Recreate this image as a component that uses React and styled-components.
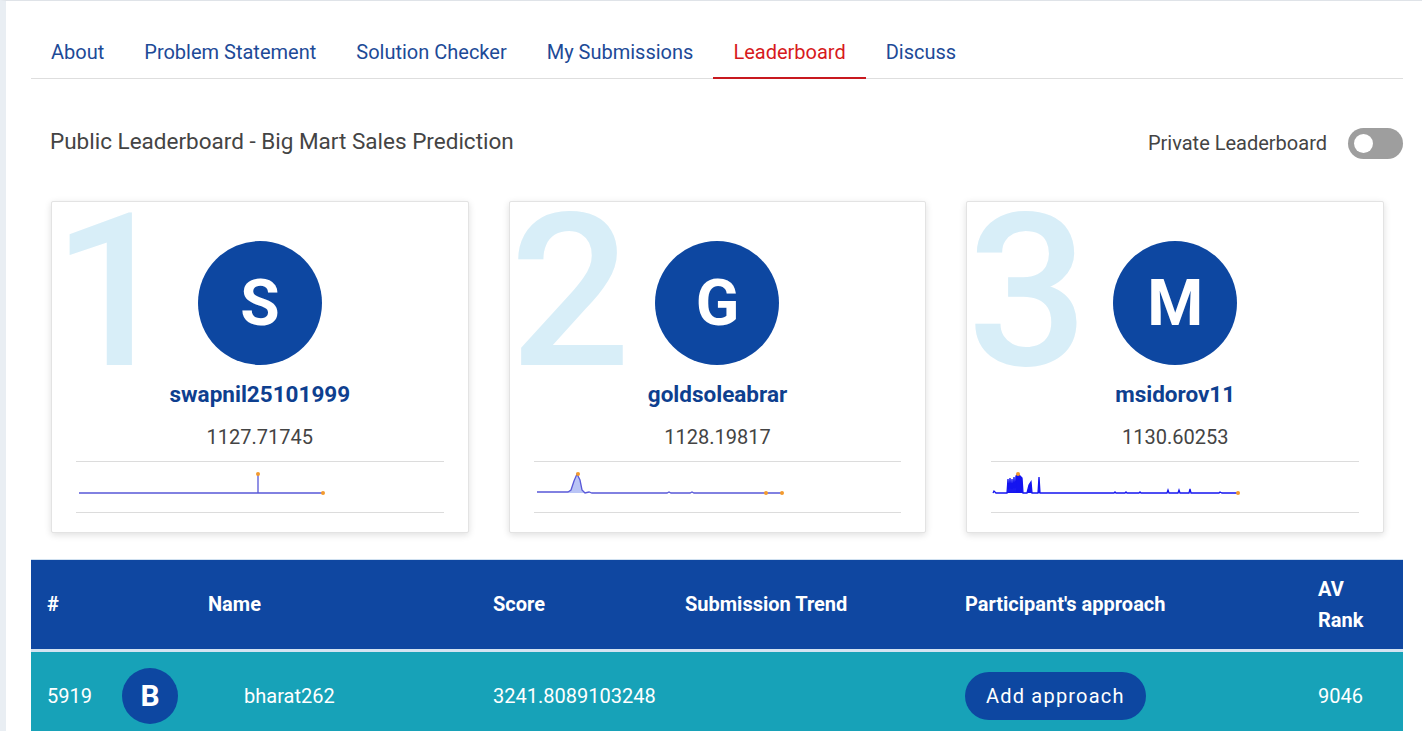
import React from 'react';
import styled, { createGlobalStyle } from 'styled-components';

const GlobalStyle = createGlobalStyle`
  body {
    margin: 0;
    background: #ffffff;
    font-family: Roboto, "Liberation Sans", sans-serif;
  }
`;

const tabs = ['About', 'Problem Statement', 'Solution Checker', 'My Submissions', 'Leaderboard', 'Discuss'];

const topThree = [
  {
    rank: 1,
    letter: 'S',
    name: 'swapnil25101999',
    score: '1127.71745',
    line: 'M3,31 L182,31 L182,12 L182,31 L247,31',
    fill: null,
    dots: [[182, 12], [247, 31]],
  },
  {
    rank: 2,
    letter: 'G',
    name: 'goldsoleabrar',
    score: '1128.19817',
    line:
      'M3,30 L28,30 L34,30 L37,28 L40,19 L43,12 L46,18 L48,28 L51,31 L55,30 L58,31 L133,31 L135,30 L137,31 L156,31 L158,30 L160,31 L248,31',
    fill:
      'M34,31 L37,28 L40,19 L43,12 L46,18 L48,28 L51,31 Z',
    dots: [[44, 12], [232, 31], [248, 31]],
  },
  {
    rank: 3,
    letter: 'M',
    name: 'msidorov11',
    score: '1130.60253',
    line:
      'M2,31 L3,29 L5,31 L16,31 L17,17 L18,31 L19,16 L20,31 L21,17 L22,31 L23,15 L24,31 L25,14 L27,12 L29,14 L31,16 L32,31 L36,31 L38,23 L40,20 L41,31 L47,31 L48,15 L49,31 L123,31 L124,30 L125,31 L134,31 L135,30 L136,31 L148,31 L149,30 L150,31 L176,31 L177,28 L178,31 L187,31 L188,28 L189,31 L198,31 L199,27 L200,31 L228,31 L229,30 L231,31 L247,31',
    fill:
      'M16,31 L17,17 L18,31 L19,16 L20,31 L21,17 L22,31 L23,15 L24,31 L25,14 L27,12 L29,14 L31,16 L32,31 Z M36,31 L38,23 L40,20 L41,31 Z M47,31 L48,15 L49,31 Z',
    dots: [[27, 12], [247, 31]],
  },
];

const App = () => (
  <Page>
    <GlobalStyle />
    <TabBar>
      {tabs.map(t => (
        <Tab key={t} active={t === 'Leaderboard'}>
          {t}
        </Tab>
      ))}
    </TabBar>

    <TitleRow>
      <Title>Public Leaderboard - Big Mart Sales Prediction</Title>
      <PrivateSwitch>
        <span>Private Leaderboard</span>
        <Toggle>
          <Knob />
        </Toggle>
      </PrivateSwitch>
    </TitleRow>

    <CardRow>
      {topThree.map(p => (
        <Card key={p.rank}>
          <BigRank>{p.rank}</BigRank>
          <Avatar size={124} fontSize={64}>{p.letter}</Avatar>
          <WinnerName>{p.name}</WinnerName>
          <WinnerScore>{p.score}</WinnerScore>
          <ChartBox>
            <svg width="260" height="50" viewBox="0 0 260 50">
              {p.fill && <path d={p.fill} fill={p.rank === 3 ? '#1414f0' : '#b9c4f5'} />}
              <path
                d={p.line}
                fill="none"
                stroke={p.rank === 3 ? '#1414f0' : '#5858d8'}
                strokeWidth="1.3"
              />
              {p.dots.map(([x, y], i) => (
                <circle key={i} cx={x} cy={y} r="2" fill="#f39a2e" />
              ))}
            </svg>
          </ChartBox>
        </Card>
      ))}
    </CardRow>

    <Table>
      <HeadRow>
        <HeadCell>#</HeadCell>
        <HeadCell>Name</HeadCell>
        <HeadCell>Score</HeadCell>
        <HeadCell>Submission Trend</HeadCell>
        <HeadCell>Participant's approach</HeadCell>
        <HeadCell>
          AV
          <br />
          Rank
        </HeadCell>
      </HeadRow>
      <BodyRow>
        <Cell>
          <RankCell>
            <span>5919</span>
            <Avatar size={56} fontSize={30}>B</Avatar>
          </RankCell>
        </Cell>
        <Cell indent={36}>bharat262</Cell>
        <Cell>3241.8089103248</Cell>
        <Cell />
        <Cell>
          <ApproachButton>Add approach</ApproachButton>
        </Cell>
        <Cell>9046</Cell>
      </BodyRow>
    </Table>
  </Page>
);

const Page = styled.div`
  min-height: 100vh;
  box-sizing: border-box;
  border-top: 1px solid #dfe3e8;
  border-left: 6px solid #e9eef3;
  padding: 0 19px 0 25px;
  background: #fff;
`;

const TabBar = styled.nav`
  display: flex;
  margin-top: 26px;
  border-bottom: 1px solid #dedede;
`;

const Tab = styled.div`
  padding: 13px 20px 13px;
  font-size: 20px;
  line-height: 24px;
  color: ${p => (p.active ? '#d71920' : '#1d4a97')};
  border-bottom: 2px solid ${p => (p.active ? '#c8191f' : 'transparent')};
  margin-bottom: -1px;
  cursor: pointer;
`;

const TitleRow = styled.div`
  display: flex;
  align-items: center;
  justify-content: space-between;
  margin-top: 46px;
  padding-left: 19px;
  height: 36px;
`;

const Title = styled.h2`
  margin: 0;
  font-size: 22.5px;
  font-weight: 400;
  color: #444;
  position: relative;
  top: -2px;
`;

const PrivateSwitch = styled.div`
  display: flex;
  align-items: center;
  gap: 21px;
  font-size: 20px;
  color: #444;
`;

const Toggle = styled.div`
  width: 55px;
  height: 31px;
  border-radius: 16px;
  background: #9e9e9e;
  display: flex;
  align-items: center;
  padding-left: 6px;
  box-sizing: border-box;
`;

const Knob = styled.div`
  width: 19px;
  height: 19px;
  border-radius: 50%;
  background: #fff;
`;

const CardRow = styled.div`
  display: grid;
  grid-template-columns: repeat(3, 1fr);
  gap: 40px;
  padding: 0 19px 0 20px;
  margin-top: 40px;
`;

const Card = styled.div`
  position: relative;
  height: 332px;
  box-sizing: border-box;
  background: #fff;
  border: 1px solid #e3e3e3;
  border-radius: 2px;
  box-shadow: 0 2px 7px rgba(0, 0, 0, 0.13);
  padding: 39px 24px 0;
  display: flex;
  flex-direction: column;
  align-items: center;
`;

const BigRank = styled.div`
  position: absolute;
  left: 0;
  top: 0;
  font-size: 213px;
  line-height: 180px;
  font-weight: 500;
  color: #d8eef8;
  z-index: 0;
`;

const Avatar = styled.div`
  position: relative;
  z-index: 1;
  flex-shrink: 0;
  width: ${p => p.size}px;
  height: ${p => p.size}px;
  border-radius: 50%;
  background: #0d47a1;
  color: #fff;
  display: flex;
  align-items: center;
  justify-content: center;
  font-size: ${p => p.fontSize}px;
  font-weight: 700;
`;

const WinnerName = styled.div`
  position: relative;
  z-index: 1;
  margin-top: 16px;
  font-size: 22.5px;
  line-height: 26px;
  font-weight: 700;
  color: #0e3f8f;
`;

const WinnerScore = styled.div`
  margin-top: 18px;
  font-size: 20px;
  line-height: 24px;
  color: #444;
`;

const ChartBox = styled.div`
  align-self: stretch;
  margin-top: 12px;
  height: 50px;
  border-top: 1px solid #dcdcdc;
  border-bottom: 1px solid #dcdcdc;

  svg {
    display: block;
  }
`;

const Table = styled.div`
  margin-top: 26px;
  border-top: 1px solid #cfe0f0;
  color: #fff;
`;

const columns = '161px 285px 192px 280px 353px 1fr';

const HeadRow = styled.div`
  display: grid;
  grid-template-columns: ${columns};
  align-items: center;
  height: 89px;
  background: #0f47a1;
  border-bottom: 3px solid #d3e3f1;
`;

const HeadCell = styled.div`
  padding-left: 16px;
  font-size: 20px;
  font-weight: 700;
  line-height: 31px;
`;

const BodyRow = styled.div`
  display: grid;
  grid-template-columns: ${columns};
  align-items: center;
  height: 88px;
  background: #17a2b8;
`;

const Cell = styled.div`
  padding-left: ${p => 16 + (p.indent || 0)}px;
  font-size: 20px;
  line-height: 24px;
`;

const RankCell = styled.div`
  display: flex;
  align-items: center;
  gap: 30px;
  font-size: 20px;
`;

const ApproachButton = styled.button`
  height: 48px;
  padding: 0 21px;
  border: none;
  border-radius: 24px;
  background: #0d47a1;
  color: #fff;
  font-family: Roboto, "Liberation Sans", sans-serif;
  font-size: 20px;
  letter-spacing: 1.2px;
  cursor: pointer;
`;

export default App;
